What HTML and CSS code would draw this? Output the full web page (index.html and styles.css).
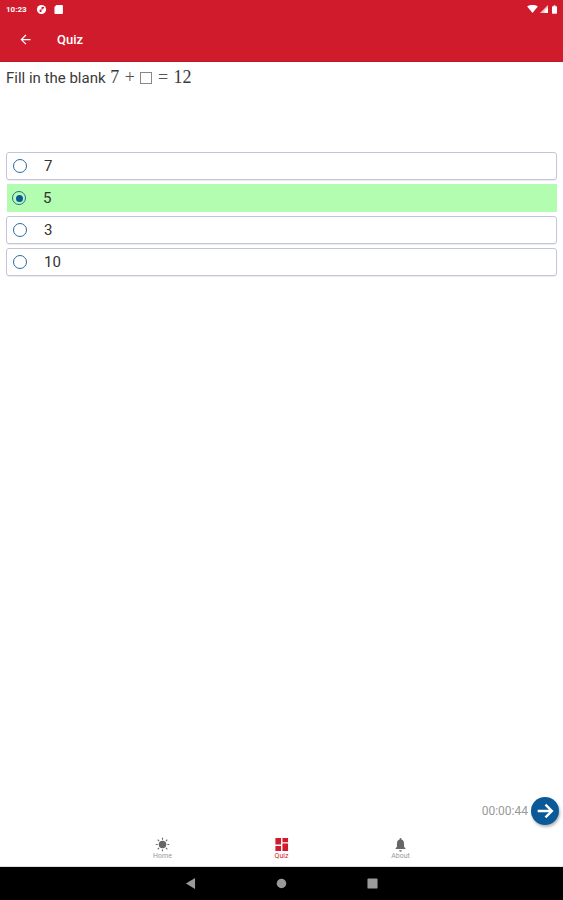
FILE: index.html
```html
<!DOCTYPE html>
<html lang="en">
<head>
    <meta charset="UTF-8">
    <meta name="viewport" content="width=device-width, initial-scale=1.0">
    <title>Quiz</title>
    <link rel="stylesheet" href="styles.css">
</head>
<body>
    <div class="page">
        <!-- Status bar + app bar -->
        <header class="header">
            <div class="status-bar">
                <span class="clock">10:23</span>
                <svg class="status-icon" viewBox="0 0 12 12"><circle cx="6" cy="6" r="5" fill="#fff"/><path d="M6 3.2h2.8v1.6H7.4V6H6zM4 6h2v2.8H4z" fill="#cf1b2b"/></svg>
                <svg class="status-icon" viewBox="0 0 12 12"><path d="M3.6 1H10a.8.8 0 0 1 .8.8v8.4a.8.8 0 0 1-.8.8H2.4a.8.8 0 0 1-.8-.8V3.4z" fill="#fff"/></svg>
                <span class="status-right">
                    <svg class="wifi" viewBox="0 0 12 9"><path d="M0 1.6C3.5-.5 8.5-.5 12 1.6L6 9z" fill="#fff"/></svg>
                    <svg class="signal" viewBox="0 0 9 9"><path d="M9 0v9H0z" fill="#fff" opacity=".75"/><path d="M9 3v6H5V6.5z" fill="#fff"/></svg>
                    <svg class="battery" viewBox="0 0 6 10"><path d="M2 0h2v1h1.2a.8.8 0 0 1 .8.8v7.4a.8.8 0 0 1-.8.8H.8a.8.8 0 0 1-.8-.8V1.800a.8.8 0 0 1 .8-.8H2z" fill="#fff"/></svg>
                </span>
            </div>
            <div class="app-bar">
                <svg class="back-icon" viewBox="0 0 24 24"><path d="M20 11H7.8l5.6-5.6L12 4l-8 8 8 8 1.400-1.400L7.800 13H20z" fill="#fff"/></svg>
                <span class="app-title">Quiz</span>
            </div>
        </header>

        <main class="content">
            <p class="question">Fill in the blank <span class="math">7 <i class="op">+</i> <i class="blank"></i> <i class="op">=</i> 12</span></p>

            <!-- Answers -->
            <div class="options">
                <label class="option"><span class="radio"></span><span>7</span></label>
                <label class="option selected"><span class="radio"></span><span>5</span></label>
                <label class="option"><span class="radio"></span><span>3</span></label>
                <label class="option"><span class="radio"></span><span>10</span></label>
            </div>

            <div class="timer-row">
                <span class="timer">00:00:44</span>
                <button class="next-btn">
                    <svg viewBox="0 0 24 24"><path d="M4 12h15M12.500 5l7 7-7 7" fill="none" stroke="#fff" stroke-width="2.600"/></svg>
                </button>
            </div>
        </main>

        <!-- Bottom tabs -->
        <nav class="tabs">
            <div class="tab">
                <svg class="tab-icon" viewBox="0 0 16 16">
                    <circle cx="8" cy="8" r="4" fill="#666"/>
                    <path d="M8 .8v2M8 13.200v2M.8 8h2M13.200 8h2M2.900 2.900l1.400 1.400M11.700 11.700l1.400 1.400M2.900 13.100l1.400-1.400M11.700 4.300l1.400-1.400" stroke="#666" stroke-width="1.200"/>
                </svg>
                <span>Home</span>
            </div>
            <div class="tab active">
                <svg class="tab-icon" viewBox="0 0 16 16">
                    <path d="M1.500 1h6v7h-6zM9 1h6v4.500H9zM9 7h6v8H9zM1.500 9.500h6V15h-6z" fill="#cf1b2b"/>
                </svg>
                <span>Quiz</span>
            </div>
            <div class="tab">
                <svg class="tab-icon" viewBox="0 0 16 16">
                    <path d="M8 1a1 1 0 0 1 1 1v.6c2 .6 2.800 2.300 2.800 4.400v3.500l1.400 1.500v.8H2.800V12l1.400-1.500V7c0-2.100.8-3.800 2.800-4.400V2a1 1 0 0 1 1-1zM6.500 14.200h3A1.500 1.500 0 0 1 6.500 14.200z" fill="#666"/>
                </svg>
                <span>About</span>
            </div>
        </nav>

        <!-- Android nav bar -->
        <footer class="system-nav">
            <svg class="sys-icon" viewBox="0 0 12 12"><path d="M11 0v12L1 6z" fill="#9a9a9a"/></svg>
            <svg class="sys-icon" viewBox="0 0 12 12"><circle cx="6" cy="6" r="5.200" fill="#9a9a9a"/></svg>
            <svg class="sys-icon" viewBox="0 0 12 12"><rect x=".5" y=".5" width="11" height="11" rx="1" fill="#9a9a9a"/></svg>
        </footer>
    </div>
</body>
</html>
```

FILE: styles.css
```css
body {
    font-family: 'Roboto', sans-serif;
    background-color: #fff;
    color: #333;
    margin: 0;
}

.page {
    display: flex;
    flex-direction: column;
    height: 900px;
    overflow: hidden;
}

.header {
    background: #cf1b2b;
    height: 61px;
    border-bottom: 1px solid #b81a28;
    color: #fff;
}

.status-bar {
    display: flex;
    align-items: center;
    gap: 6px;
    height: 18px;
    padding: 0 6px;
}

.clock {
    font-size: 8px;
    font-weight: 700;
    margin-right: 3px;
}

.status-icon {
    width: 11px;
    height: 11px;
}

.status-right {
    display: flex;
    align-items: center;
    gap: 2px;
    margin-left: auto;
}

.wifi {
    width: 11px;
    height: 8px;
}

.signal {
    width: 8px;
    height: 8px;
}

.battery {
    width: 5px;
    height: 9px;
    margin-left: 2px;
}

.app-bar {
    display: flex;
    align-items: center;
    height: 43px;
    padding-left: 18px;
}

.back-icon {
    width: 15px;
    height: 15px;
}

.app-title {
    font-size: 13px;
    font-weight: 500;
    margin-left: 24px;
}

.content {
    flex: 1;
    display: flex;
    flex-direction: column;
    padding: 0 6px 0 6px;
}

.question {
    margin: 6px 0 0;
    font-size: 15px;
    line-height: 19px;
    height: 84px;
    color: #3a3a3a;
}

.math {
    font-family: 'Liberation Serif', serif;
    font-size: 18px;
    margin-left: 1px;
}

.op {
    font-style: normal;
    color: #555;
    margin: 0 1px;
}

.blank {
    display: inline-block;
    width: 12px;
    height: 12px;
    border: 1px solid #888;
    box-sizing: border-box;
    vertical-align: -1px;
}

.options {
    display: flex;
    flex-direction: column;
    gap: 4px;
}

.option {
    display: flex;
    align-items: center;
    height: 28px;
    box-sizing: border-box;
    border: 1px solid #c3c5d8;
    border-radius: 3px;
    padding-left: 6px;
    font-size: 15px;
    box-shadow: 0 1px 1px rgba(0, 0, 0, 0.08);
}

.option.selected {
    background: #b2fdb0;
    border: none;
    border-radius: 0;
    box-shadow: none;
    margin: 0 0 0 1px;
    padding-left: 5px;
}

.radio {
    width: 14px;
    height: 14px;
    box-sizing: border-box;
    border: 1.500px solid #2f6a9c;
    border-radius: 50%;
    margin-right: 17px;
    background-clip: content-box;
}

.selected .radio {
    padding: 2.500px;
    background-color: #0b5a97;
}

.timer-row {
    display: flex;
    align-items: center;
    justify-content: flex-end;
    margin-top: auto;
    margin-right: -2px;
    margin-bottom: 5px;
    gap: 3px;
}

.timer {
    font-size: 12px;
    color: #999;
}

.next-btn {
    display: flex;
    width: 28px;
    height: 28px;
    padding: 3px;
    border: none;
    border-radius: 50%;
    background: #0b5a97;
    box-shadow: 1px 2px 3px rgba(0, 0, 0, 0.3);
}

.next-btn svg {
    width: 22px;
    height: 22px;
}

.tabs {
    display: flex;
    justify-content: center;
    gap: 71px;
    height: 36px;
    border-bottom: 1px solid #ddd;
    box-sizing: content-box;
}

.tab {
    display: flex;
    flex-direction: column;
    align-items: center;
    width: 48px;
    padding-top: 7px;
    font-size: 7px;
    color: #999;
}

.tab.active {
    color: #cf1b2b;
}

.tab-icon {
    width: 15px;
    height: 15px;
}

.system-nav {
    display: flex;
    justify-content: center;
    align-items: center;
    gap: 80px;
    height: 33px;
    background: #000;
}

.sys-icon {
    width: 11px;
    height: 11px;
}
```
